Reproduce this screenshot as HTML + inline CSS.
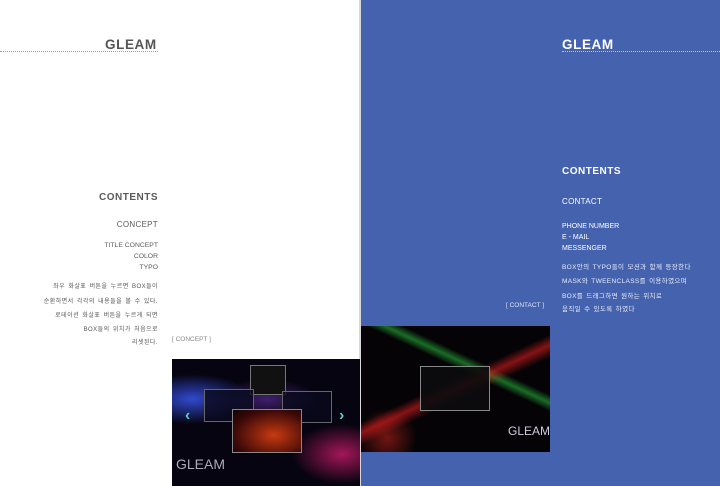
<!DOCTYPE html>
<html><head><meta charset="utf-8"><style>
*{margin:0;padding:0;box-sizing:border-box}
body{width:720px;height:486px;position:relative;overflow:hidden;background:#fff;font-family:"Liberation Sans","Noto Sans CJK KR",sans-serif}
.blue{position:absolute;left:361px;top:0;width:359px;height:486px;background:#4462ae}
.edge{position:absolute;left:359px;top:0;width:2px;height:486px;background:#d8d8d8}
.t{position:absolute;white-space:nowrap}
.r{text-align:right}
.g{color:#5a5a5a}.w{color:#fff}
.dot{position:absolute;height:0;border-top:1px dotted #8aa0d0}
.img{position:absolute;background:#050308;overflow:hidden}
.k{position:absolute;font-size:6px;color:#555;letter-spacing:.45px;word-spacing:1.2px;white-space:nowrap}
.kw{position:absolute;font-size:6.5px;color:#e8ecf8;left:562px;letter-spacing:.35px;word-spacing:1px;white-space:nowrap}
</style></head><body>
<div class="blue"></div><div class="edge"></div>
<div class="t g" style="left:105px;top:37px;font-size:13.5px;font-weight:bold;color:#555;letter-spacing:.6px">GLEAM</div>
<div class="dot" style="left:0;top:51px;width:158px"></div>
<div class="t w" style="left:562px;top:37px;font-size:13.5px;font-weight:bold;letter-spacing:.6px">GLEAM</div>
<div class="dot" style="left:562px;top:51px;width:158px;border-color:#b8c8ee"></div>

<div class="t g r" style="right:562px;top:192px;font-size:10px;font-weight:bold;letter-spacing:.5px">CONTENTS</div>
<div class="t g r" style="right:562px;top:220px;font-size:8px;letter-spacing:.3px">CONCEPT</div>
<div class="t g r" style="right:562px;top:240px;font-size:6.8px;line-height:11px">TITLE CONCEPT<br>COLOR<br>TYPO</div>
<div class="k" style="right:562px;top:281px">좌우 화살표 버튼을 누르면 BOX들이</div>
<div class="k" style="right:562px;top:296px">순환하면서 각각의 내용들을 볼 수 있다.</div>
<div class="k" style="right:562px;top:310px">로테이션 화살표 버튼을 누르게 되면</div>
<div class="k" style="right:562px;top:324px">BOX들의 위치가 처음으로</div>
<div class="k" style="right:562px;top:337px">리셋된다.</div>
<div class="t" style="left:172px;top:336px;font-size:6.5px;color:#888">[ CONCEPT ]</div>

<div class="t w" style="left:562px;top:166px;font-size:10px;font-weight:bold;letter-spacing:.5px">CONTENTS</div>
<div class="t w" style="left:562px;top:197px;font-size:8px;letter-spacing:.3px">CONTACT</div>
<div class="t w" style="left:562px;top:221px;font-size:7px;line-height:11px">PHONE NUMBER<br>E - MAIL<br>MESSENGER</div>
<div class="kw" style="top:261px">BOX안의 TYPO들이 모션과 함께 등장한다</div>
<div class="kw" style="top:275px">MASK와 TWEENCLASS를 이용하였으며</div>
<div class="kw" style="top:290px">BOX를 드래그하면 원하는 위치로</div>
<div class="kw" style="top:303px">움직일 수 있도록 하였다</div>
<div class="t" style="left:506px;top:302px;font-size:6.5px;color:#dfe5f5">[ CONTACT ]</div>

<div class="img" style="left:172px;top:359px;width:188px;height:127px;background:radial-gradient(ellipse 60px 25px at 20px 40px,rgba(60,90,255,.8),transparent),radial-gradient(ellipse 50px 30px at 170px 95px,rgba(230,30,120,.7),transparent),radial-gradient(ellipse 50px 20px at 95px 40px,rgba(120,60,200,.5),transparent),#060410">
 <div style="position:absolute;left:78px;top:6px;width:36px;height:30px;border:1px solid #777;background:#111"></div>
 <div style="position:absolute;left:32px;top:30px;width:50px;height:33px;border:1px solid #666;background:rgba(10,10,30,.8)"></div>
 <div style="position:absolute;left:110px;top:32px;width:50px;height:32px;border:1px solid #666;background:rgba(10,10,30,.8)"></div>
 <div style="position:absolute;left:60px;top:50px;width:70px;height:44px;border:1px solid #888;background:radial-gradient(ellipse at 60% 60%,#c83a10,#3a0808 70%,#120404)"></div>
 <div style="position:absolute;left:13px;top:48px;color:#5cc;font-size:16px;font-weight:bold">‹</div>
 <div style="position:absolute;left:167px;top:48px;color:#5cc;font-size:16px;font-weight:bold">›</div>
 <div style="position:absolute;left:4px;top:97px;color:#aab;font-size:14px;font-weight:300">GLEAM</div>
</div>
<div class="img" style="left:361px;top:326px;width:189px;height:126px;background:linear-gradient(155deg,transparent 45%,rgba(220,30,30,.6) 50%,transparent 56%),linear-gradient(25deg,transparent 60%,rgba(40,180,60,.6) 64%,transparent 68%),radial-gradient(circle 30px at 26px 112px,rgba(220,40,30,.5),transparent),#050306">
 <div style="position:absolute;left:59px;top:40px;width:70px;height:45px;border:1px solid #888;background:rgba(12,12,14,.9)"></div>
 <div style="position:absolute;left:147px;top:98px;color:#ccd;font-size:12px;font-weight:300">GLEAM</div>
</div>
</body></html>
